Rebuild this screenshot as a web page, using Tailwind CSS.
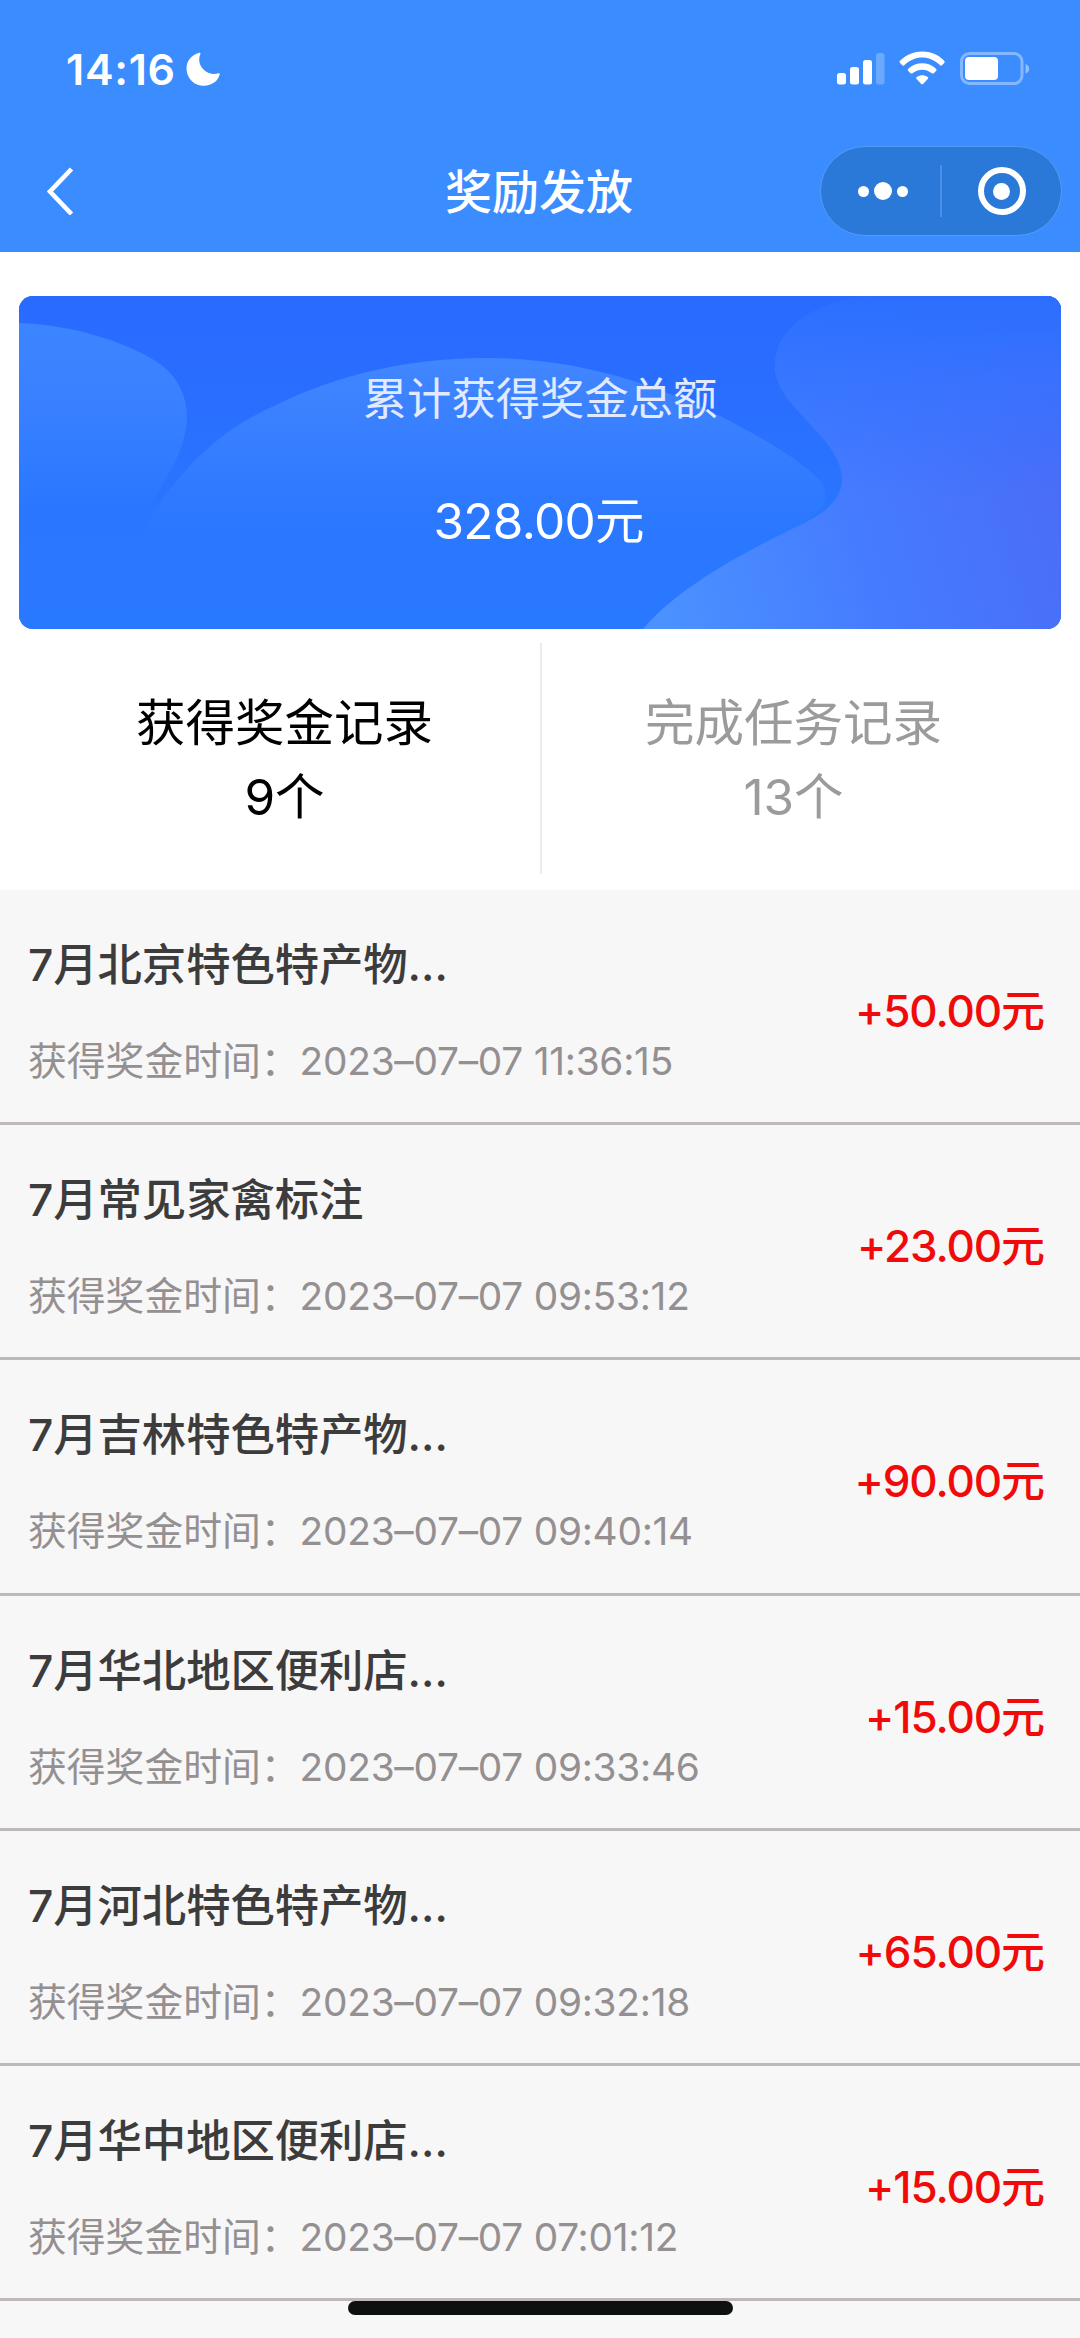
<!DOCTYPE html>
<html lang="zh-CN">
<head>
<meta charset="utf-8">
<title>奖励发放</title>
<script src="https://cdn.jsdelivr.net/npm/@tailwindcss/browser@4"></script>
</head>
<body class="relative w-[1080px] h-[2338px] overflow-hidden bg-[#f7f7f7] font-['Inter','Noto_Sans_CJK_SC',sans-serif]">
<header class="h-[252px] bg-[#3a8cff] text-white">
  <div class="flex h-[138px] items-start justify-between pl-[66px] pr-[50px] pt-[45px]">
    <div class="flex items-center gap-[10px]">
      <span class="text-[43px] leading-[48px] font-semibold tracking-[0.700px]">14:16</span>
      <svg class="size-[34px]" viewBox="0 0 34 34" fill="#fff"><path d="M13.500 .8C3.500 3.500-.3 11 .7 19C2 28 9.500 34 18 33.800C26 33.600 32 29 33.700 22.500C34 21.500 33 21 32.200 21.300C28 22.600 22 21.800 18 18C13.500 13.800 11.800 8 14.400 2.100C14.800 1.200 14.300 .6 13.500 .8Z"/></svg>
    </div>
    <svg class="w-[194px] h-[36px] mt-[5px]" viewBox="0 0 194 36" fill="#fff">
      <rect x="1" y="23" width="9" height="11.500" rx="2.500"/>
      <rect x="14" y="17" width="9" height="17.500" rx="2.500"/>
      <rect x="27" y="10" width="9" height="24.500" rx="2.500"/>
      <rect x="40" y="3" width="8.500" height="31.500" rx="2.500" opacity=".25"/>
      <g transform="translate(1.500 0)">
        <path d="M62.800 13.200C61.800 12.200 61.800 11.400 62.800 10.500C75 -1.500 95 -1.500 106.500 10.500C107.400 11.400 107.400 12.200 106.500 13.200L104.800 14.900C103.800 15.900 103.200 15.800 102.300 15C92 5 77.500 5 67 15C66.200 15.800 65.500 15.900 64.500 14.900Z"/>
        <path d="M71 21.200C70 20.200 70 19.400 71 18.500C78.500 11.500 91 11.500 98.300 18.500C99.300 19.400 99.300 20.200 98.300 21.200L96.500 22.900C95.500 23.900 94.900 23.700 94 23C88.500 18.500 81 18.500 75.300 23C74.400 23.700 73.800 23.900 72.800 22.900Z"/>
        <path d="M79.400 29.200C78.400 28.200 78.400 27.400 79.500 26.700C82.500 24.600 87 24.600 89.900 26.700C91 27.400 91 28.200 90 29.200L85.800 33.700C85 34.500 84.300 34.500 83.500 33.700Z"/>
      </g>
      <rect x="125.500" y="3.500" width="60.500" height="30" rx="8" fill="none" stroke="#fff" stroke-width="3" opacity=".38"/>
      <rect x="129" y="7" width="33" height="23" rx="4"/>
      <path d="M189.500 14C194.500 15.500 194.500 22 189.500 23.500Z" opacity=".45"/>
    </svg>
  </div>
  <div class="grid grid-cols-[1fr_auto_1fr] items-center px-[18px] h-[106px]">
    <svg class="ml-[28px] w-[28px] h-[48px]" viewBox="0 0 28 48" fill="none" stroke="#fff" stroke-width="4.600"><path d="M25.500 2L4 24.500L25.500 47"/></svg>
    <h1 class="pt-[2px] pr-[2px] text-[47px] leading-[60px] font-medium">奖励发放</h1>
    <div class="flex justify-self-end w-[242px] h-[90px] items-center rounded-full border border-[#559bf5] bg-[#2a78d7]">
      <div class="flex w-[119px] items-center justify-center gap-[5px] pl-[5px]">
        <i class="size-[11px] rounded-full bg-white"></i><i class="size-[18px] rounded-full bg-white"></i><i class="size-[11px] rounded-full bg-white"></i>
      </div>
      <div class="h-[52px] w-[2px] bg-[#4a90e8]"></div>
      <div class="flex flex-1 justify-center"><div class="flex size-[48px] items-center justify-center rounded-full border-[6px] border-white"><i class="size-[17px] rounded-full bg-white"></i></div></div>
    </div>
  </div>
</header>
<main>
  <div class="h-[638px] bg-white pt-[44px]">
    <section class="relative mx-auto w-[1042px] h-[333px] overflow-hidden rounded-[14px] bg-[#2a70ff]">
      <svg class="absolute inset-0 size-full" viewBox="0 0 1042 333" preserveAspectRatio="none">
        <defs>
          <linearGradient id="base" x1="0" y1="0" x2="0" y2="1"><stop offset="0" stop-color="#296aff"/><stop offset=".3" stop-color="#296eff"/><stop offset=".75" stop-color="#2978ff"/><stop offset="1" stop-color="#2979ff"/></linearGradient>
          <linearGradient id="left" gradientUnits="userSpaceOnUse" x1="0" y1="27" x2="0" y2="215"><stop offset="0" stop-color="#3c85ff"/><stop offset=".4" stop-color="#3981ff"/><stop offset="1" stop-color="#2977ff"/></linearGradient>
          <linearGradient id="hill" gradientUnits="userSpaceOnUse" x1="0" y1="62" x2="0" y2="262"><stop offset="0" stop-color="#4286ff"/><stop offset=".45" stop-color="#367eff"/><stop offset=".65" stop-color="#2f7aff"/><stop offset=".92" stop-color="#2978ff"/></linearGradient>
          <linearGradient id="wave" gradientUnits="userSpaceOnUse" x1="650" y1="333" x2="1060" y2="210"><stop offset="0" stop-color="#4b91ff"/><stop offset=".5" stop-color="#457bff"/><stop offset="1" stop-color="#4a6cf7"/></linearGradient>
          <linearGradient id="shade" x1="0" y1="0" x2="0" y2="1"><stop offset="0" stop-color="#2b6eff"/><stop offset=".25" stop-color="#3373ff" stop-opacity=".75"/><stop offset=".6" stop-color="#3373ff" stop-opacity="0"/></linearGradient>
        </defs>
        <path fill="url(#base)" d="M0 0H1042V333H0Z"/>
        <path fill="url(#left)" d="M0 27C50 29 100 43 135 64C158 78 168 99 168 122C167 155 147 182 128 215H0Z"/>
        <path fill="url(#hill)" d="M111 262C155 165 215 128 255 110C320 78 390 62 469 62C560 62 640 90 699 119C740 140 775 160 799 182C812 197 810 215 775 231L720 262Z"/>
        <path fill="url(#wave)" d="M850 0C785 8 756 38 756 70C756 112 823 140 823 184C823 205 802 220 777 231C717 260 657 294 624 333H1042V0Z"/>
        <path fill="url(#shade)" d="M850 0C785 8 756 38 756 70C756 112 823 140 823 184C823 205 802 220 777 231C717 260 657 294 624 333H1042V0Z"/>
      </svg>
      <div class="relative flex flex-col items-center pt-[73px]">
        <p class="text-[44.300px] leading-[60px] text-[#e1eaff]">累计获得奖金总额</p>
        <p class="mt-[60px] pr-[2px] text-[49.500px] leading-[64px] text-white"><span class="tracking-[-0.700px]">328.00</span>元</p>
      </div>
    </section>
    <nav class="mt-[14px] flex h-[231px] pt-[43px] text-center text-[49.500px] leading-[74px]">
      <div class="relative w-[542px] pl-[27px] text-black"><p>获得奖金记录</p><p>9个</p><i class="absolute right-0 -top-[43px] h-[231px] w-[2px] bg-[#ebebeb]"></i></div>
      <div class="w-[538px] pr-[35px] text-[#9b9b9b]"><p>完成任务记录</p><p>13个</p></div>
    </nav>
  </div>
  <ul id="rows"></ul>
</main>
<div class="absolute left-[348px] top-[2301px] h-[14px] w-[385px] rounded-full bg-[#0e100f]"></div>
<script>
  const records = [
    ['7月北京特色特产物…', '2023–07–07 11:36:15', '+50.00元'],
    ['7月常见家禽标注', '2023–07–07 09:53:12', '+23.00元'],
    ['7月吉林特色特产物…', '2023–07–07 09:40:14', '+90.00元'],
    ['7月华北地区便利店…', '2023–07–07 09:33:46', '+15.00元'],
    ['7月河北特色特产物…', '2023–07–07 09:32:18', '+65.00元'],
    ['7月华中地区便利店…', '2023–07–07 07:01:12', '+15.00元']
  ];
  document.getElementById('rows').innerHTML = records.map(([name, time, sum]) => `
    <li class="flex h-[235.200px] justify-between border-b-[3px] border-[#bfb8ba] pl-[28px] pr-[36px]">
      <div class="pt-[45px]">
        <p class="text-[44.400px] leading-[60px] font-medium tracking-[-0.100px] text-[#3d3c3d]">${name}</p>
        <p class="mt-[36px] text-[38.800px] leading-[60px] text-[#949092]">获得奖金时间：<span class="tracking-[-0.250px]">${time}</span></p>
      </div>
      <p class="self-center pt-[10px] text-[44px] leading-[60px] font-medium tracking-[-1.100px] text-[#f00a0a]">${sum}</p>
    </li>`).join('');
</script>
</body>
</html>
